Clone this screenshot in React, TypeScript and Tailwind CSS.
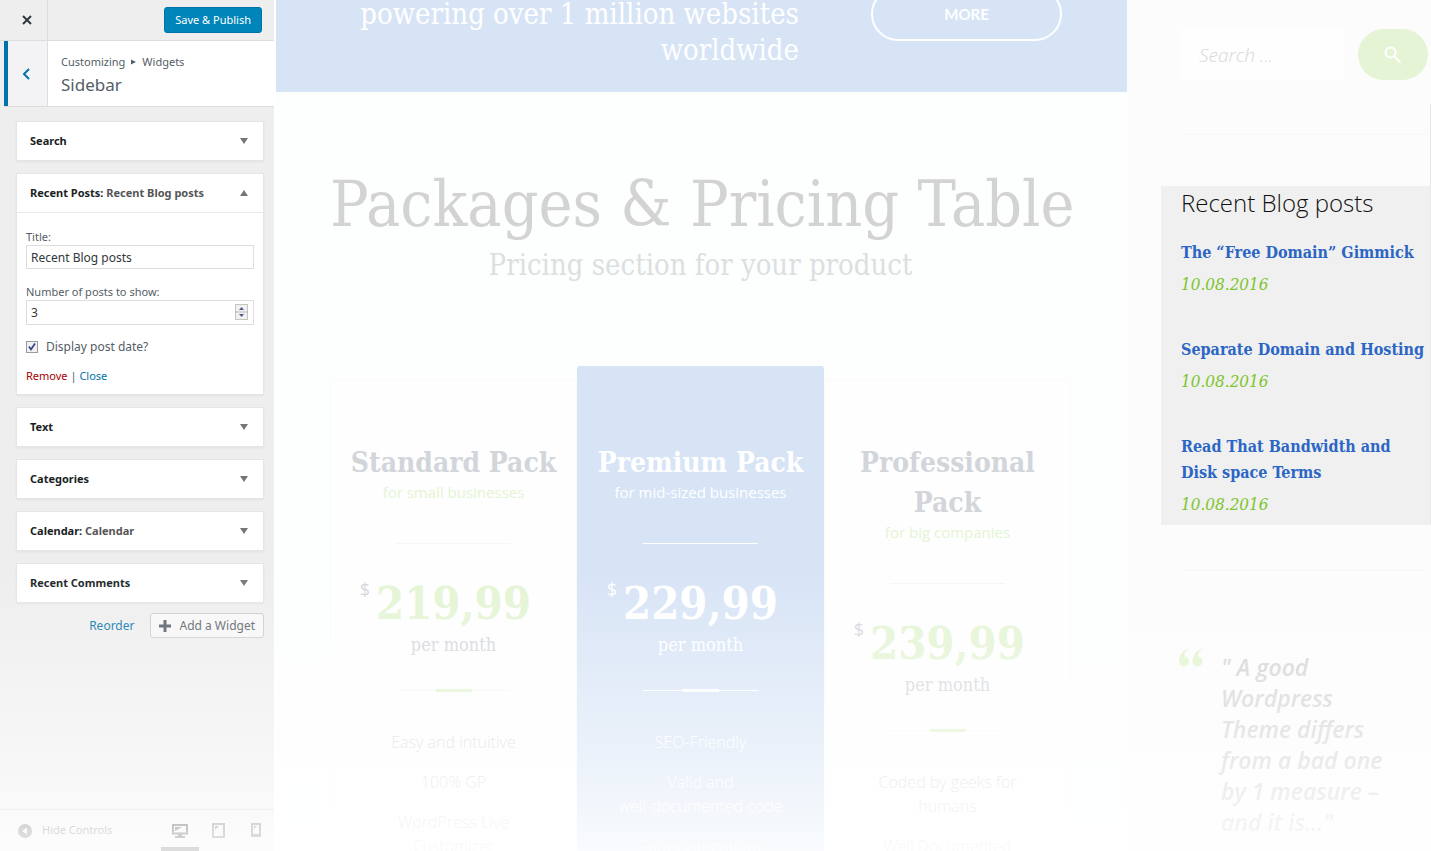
import type { ReactNode } from "react";

const serif = "font-['DejaVu_Serif_Condensed','DejaVu_Serif',serif]";
const sans = "font-['Open_Sans','Noto_Sans',sans-serif]";

function Caret({ up = false }: { up?: boolean }) {
  return (
    <svg width="8" height="6" viewBox="0 0 8 6" fill="#72777c" aria-hidden="true">
      <path d={up ? "M0 6 4 0 8 6Z" : "M0 0H8L4 6Z"} />
    </svg>
  );
}

function Widget({ name, title, children }: { name: string; title?: string; children?: ReactNode }) {
  return (
    <section className="border border-[#e5e5e5] bg-white shadow-xs">
      <button
        type="button"
        className={`flex w-full items-center justify-between pr-[15px] pl-[13px] text-left text-[11px] font-bold text-[#191e23] ${children ? "h-[39px] border-b border-[#eaeaea]" : "h-[38px]"}`}
      >
        <span>
          {name}
          {title && (
            <>
              : <span className="text-[#555]">{title}</span>
            </>
          )}
        </span>
        <Caret up={Boolean(children)} />
      </button>
      {children}
    </section>
  );
}

function RecentPostsForm() {
  return (
    <form className="px-[9px] pt-4 pb-[10px] text-[11px] leading-4 text-[#555d66]">
      <label htmlFor="title" className="block">
        Title:
      </label>
      <input
        id="title"
        type="text"
        defaultValue="Recent Blog posts"
        className="block h-6 w-full border border-[#ddd] bg-white px-1 text-xs text-[#32373c] outline-none"
      />
      <label htmlFor="count" className="mt-[15px] block">
        Number of posts to show:
      </label>
      <div className="relative">
        <input
          id="count"
          type="text"
          inputMode="numeric"
          defaultValue="3"
          className="block h-[25px] w-full border border-[#ddd] bg-white px-1 text-xs text-[#32373c] outline-none"
        />
        <svg className="absolute top-1 right-1.5" width="13" height="16" viewBox="0 0 13 16" aria-hidden="true">
          <rect x=".5" y=".5" width="12" height="15" fill="#f1f1f1" stroke="#c4c4c4" />
          <path d="M0 8H13" stroke="#b5b5b5" />
          <path d="M4 6 6.500 3 9 6ZM4 10H9L6.500 13Z" fill="#4b5a86" />
        </svg>
      </div>
      <label className="mt-[14px] flex items-center gap-2 text-xs leading-4">
        <span className="relative block size-3">
          <input
            type="checkbox"
            defaultChecked
            className="block size-3 appearance-none border border-[#9a9a9a] bg-[#f0f0f3]"
          />
          <svg className="absolute top-0 left-0" width="12" height="12" viewBox="0 0 12 12" aria-hidden="true">
            <path d="M3 5.500 5 8.500 9 2.500" fill="none" stroke="#3b4a82" strokeWidth="1.800" />
          </svg>
        </span>
        Display post date?
      </label>
      <div className="mt-[13px]">
        <a href="#remove" className="text-[#a00]">
          Remove
        </a>{" "}
        |{" "}
        <a href="#close" className="text-[#0073aa]">
          Close
        </a>
      </div>
    </form>
  );
}

function Customizer() {
  return (
    <aside className="flex w-[276px] shrink-0 flex-col border-r-2 border-white bg-[#eee] font-['Noto_Sans','Open_Sans',sans-serif]">
      <div className="flex h-[41px] shrink-0 items-center border-b border-[#ddd]">
        <button
          type="button"
          aria-label="Close customizer"
          className="flex h-full w-12 items-center justify-center border-r border-[#ddd] pl-1.5"
        >
          <svg width="10" height="10" viewBox="0 0 10 10" stroke="#32373c" strokeWidth="2" aria-hidden="true">
            <path d="M1 1 9 9M9 1 1 9" />
          </svg>
        </button>
        <button
          type="button"
          className="mr-3 ml-auto h-[26px] rounded-[3px] border border-[#0073aa] bg-[#0085ba] px-2.5 text-[11px] text-white"
        >
          Save &amp; Publish
        </button>
      </div>
      <div className="ml-1 flex h-[66px] shrink-0 border-b border-[#ddd] bg-white">
        <button
          type="button"
          aria-label="Back"
          className="flex w-11 items-center justify-center border-r border-l-4 border-r-[#ddd] border-l-[#0073aa] bg-[#f3f3f5] pr-1"
        >
          <svg width="8" height="12" viewBox="0 0 8 12" fill="none" stroke="#0073aa" strokeWidth="2" aria-hidden="true">
            <path d="M7 1 2 6 7 11" />
          </svg>
        </button>
        <div className="pt-3 pl-[13px] text-[#555d66]">
          <p className="flex items-center gap-1.5 text-[11px] leading-[18px]">
            Customizing
            <svg width="5" height="6" viewBox="0 0 5 6" fill="#555d66" aria-hidden="true">
              <path d="M0 .5 5 3 0 5.500Z" />
            </svg>
            Widgets
          </p>
          <h1 className="text-[17px] leading-7">Sidebar</h1>
        </div>
      </div>
      <div className="flex flex-1 flex-col gap-3 pt-[14px] pr-2.5 pl-4">
        <Widget name="Search" />
        <Widget name="Recent Posts" title="Recent Blog posts">
          <RecentPostsForm />
        </Widget>
        <Widget name="Text" />
        <Widget name="Categories" />
        <Widget name="Calendar" title="Calendar" />
        <Widget name="Recent Comments" />
        <div className="-mt-0.5 flex items-center justify-end gap-4 text-xs">
          <button type="button" className="text-[#0073aa]">
            Reorder
          </button>
          <button
            type="button"
            className="flex h-[25px] items-center gap-2 rounded-[3px] border border-[#ccc] bg-[#f7f7f7] px-2 text-[#555d66]"
          >
            <svg width="12" height="12" viewBox="0 0 12 12" stroke="#555d66" strokeWidth="3" aria-hidden="true">
              <path d="M6 0V12M0 6H12" />
            </svg>
            Add a Widget
          </button>
        </div>
      </div>
      <footer className="flex h-[42px] shrink-0 items-stretch border-t border-[#ccc] text-[11px] text-[#555]">
        <button type="button" className="flex items-center gap-2.5 pl-[18px]">
          <svg width="14" height="14" viewBox="0 0 14 14" aria-hidden="true">
            <circle cx="7" cy="7" r="7" fill="#555" />
            <path d="M9 3.500V10.500L4 7Z" fill="#eee" />
          </svg>
          Hide Controls
        </button>
        <div className="ml-auto flex">
          <button
            type="button"
            aria-label="Desktop preview"
            className="flex w-[38px] items-center justify-center border-b-4 border-[#222] pt-1"
          >
            <svg width="16" height="14" viewBox="0 0 16 14" aria-hidden="true">
              <path d="M1 1H15V9.500H1Z" fill="none" stroke="#111" strokeWidth="2" />
              <path d="M3 3H10L3 7ZM6 10H10V12H13V14H3V12H6Z" fill="#111" />
            </svg>
          </button>
          <button type="button" aria-label="Tablet preview" className="flex w-[38px] items-center justify-center">
            <svg width="13" height="15" viewBox="0 0 13 15" aria-hidden="true">
              <path d="M1 1H12V14H1Z" fill="none" stroke="#555" strokeWidth="2" />
              <path d="M3 3H7L3 7Z" fill="#555" />
            </svg>
          </button>
          <button type="button" aria-label="Mobile preview" className="flex w-[37px] items-center justify-center">
            <svg width="10" height="15" viewBox="0 0 10 15" aria-hidden="true">
              <path d="M1 1H9V13H1Z" fill="none" stroke="#555" strokeWidth="2" />
              <path d="M3 3H6L3 6ZM1 11H9V14H1Z" fill="#555" />
            </svg>
          </button>
        </div>
      </footer>
    </aside>
  );
}

type Pack = {
  name: string;
  tagline: string;
  price: string;
  features: string[];
  premium?: boolean;
};

const packs: Pack[] = [
  {
    name: "Standard Pack",
    tagline: "for small businesses",
    price: "219,99",
    features: ["Easy and intuitive", "100% GP", "WordPress Live\nCustomizer"],
  },
  {
    name: "Premium Pack",
    tagline: "for mid-sized businesses",
    price: "229,99",
    features: ["SEO-Friendly", "Valid and\nwell-documented code", "Fonts integration"],
    premium: true,
  },
  {
    name: "Professional Pack",
    tagline: "for big companies",
    price: "239,99",
    features: ["Coded by geeks for\nhumans", "Well Documented"],
  },
];

function PackCard({ pack }: { pack: Pack }) {
  const p = pack.premium;
  return (
    <article
      className={`flex flex-col items-center text-center ${
        p ? "rounded-t-[3px] bg-[#d7e4f6] pt-[77px] text-white" : "mt-[14px] border border-[#fafafb] bg-[#fefefe] pt-[62px] text-[#d2d5da]"
      }`}
    >
      <h3 className={`px-3 text-[28px] leading-10 font-bold ${serif}`}>{pack.name}</h3>
      <p className={`text-[15px] leading-[18px] ${sans} ${p ? "" : "text-[#e3f4d3]"}`}>{pack.tagline}</p>
      <hr className={`mt-[42px] w-[115px] ${p ? "border-white" : "border-[#f6f6f7]"}`} />
      <div className={`relative mt-[33px] ${serif}`}>
        <span className={`absolute top-0 right-full mr-1.5 text-lg leading-6 ${sans}`}>$</span>
        <span className={`block text-[45px] leading-[54px] font-bold ${p ? "" : "text-[#e3f4d3]"}`}>{pack.price}</span>
      </div>
      <p className={`mt-0.5 text-lg leading-6 ${serif}`}>per month</p>
      <div className="mt-8 flex w-[115px] items-center">
        <span className={`h-px flex-1 ${p ? "bg-white" : "bg-[#f6f6f7]"}`} />
        <span className={`h-[3px] w-9 ${p ? "bg-white" : "bg-[#e0f3cd]"}`} />
        <span className={`h-px flex-1 ${p ? "bg-white" : "bg-[#f6f6f7]"}`} />
      </div>
      <ul className={`mt-[38px] flex flex-col gap-4 text-base leading-6 font-light whitespace-pre-line ${sans}`}>
        {pack.features.map((feature) => (
          <li key={feature}>{feature}</li>
        ))}
      </ul>
    </article>
  );
}

function Preview() {
  return (
    <main className="flex min-w-0 flex-1 flex-col bg-[#fdfefe]">
      <section className={`flex h-[92px] shrink-0 items-end justify-end gap-[72px] bg-[#d7e4f6] pr-[65px] text-white ${serif}`}>
        <p className="w-[470px] pb-6 text-right text-[29px] leading-9">powering over 1 million websites worldwide</p>
        <button
          type="button"
          className="mb-[51px] h-[54px] w-[191px] shrink-0 rounded-full border-2 border-white font-['Lato',sans-serif] text-[15px] font-bold"
        >
          MORE
        </button>
      </section>
      <section className="shrink-0 pt-[74px] pr-14 pl-[54px]">
        <h2 className={`text-center text-[64px] leading-[76px] whitespace-nowrap text-[#d3d3d3] ${serif}`}>
          Packages &amp; Pricing Table
        </h2>
        <p className={`text-center text-[29px] leading-[46px] text-[#dcdee1] ${serif}`}>
          Pricing section for your product
        </p>
        <div className="mt-[78px] grid grid-cols-3">
          {packs.map((pack) => (
            <PackCard key={pack.name} pack={pack} />
          ))}
        </div>
      </section>
    </main>
  );
}

const posts = ["The “Free Domain” Gimmick", "Separate Domain and Hosting", "Read That Bandwidth and Disk space Terms"];

function BlogSidebar() {
  return (
    <aside className="relative w-[304px] shrink-0 bg-[#fcfcfd]">
      <form className="flex items-center gap-[13px] pt-[29px] pr-[3px] pl-[53px]">
        <input
          type="search"
          aria-label="Search"
          placeholder="Search ..."
          className={`h-[51px] min-w-0 flex-1 bg-[#fefefe] px-[19px] text-[19px] font-light italic outline-none placeholder:text-[#d5d8dc] ${sans}`}
        />
        <button
          type="submit"
          aria-label="Submit search"
          className="flex h-[51px] w-[70px] items-center justify-center rounded-full bg-[#e4f4d5]"
        >
          <svg width="18" height="18" viewBox="0 0 18 18" fill="none" stroke="#fff" strokeWidth="2.200" aria-hidden="true">
            <circle cx="6.500" cy="6.500" r="5" />
            <path d="M10.500 10.500 16.500 16.500" />
          </svg>
        </button>
      </form>
      <hr className="mt-[54px] mr-[3px] ml-[55px] border-[#f7f7f8]" />
      <section className="mt-[51px] ml-[34px] bg-[#f0f0f0] pb-2 pl-5">
        <h2 className={`text-2xl leading-[34px] font-light text-[#111] ${sans}`}>Recent Blog posts</h2>
        <ul className={`mt-5 flex flex-col gap-10 ${serif}`}>
          {posts.map((post) => (
            <li key={post}>
              <a href="#post" className="block pr-1 text-base leading-[26px] font-bold text-[#2c66c4]">
                {post}
              </a>
              <time className="mt-[5px] block text-[17px] leading-[26px] text-[#7cc52b] italic">10.08.2016</time>
            </li>
          ))}
        </ul>
      </section>
      <hr className="mt-[45px] mr-[3px] ml-[55px] border-[#f7f7f8]" />
      <blockquote className="mt-[81px] flex gap-4 pr-9 pl-[52px]">
        <svg className="-mt-1 shrink-0" width="26" height="19" viewBox="0 0 26 19" fill="#e0f3cd" aria-hidden="true">
          <path d="M12 0C7 2 5.500 5 5.500 8.500A5 5 0 1 1 0 13C0 7 4 1.500 12 0Z" />
          <path d="M25.500 0C20.500 2 19 5 19 8.500A5 5 0 1 1 13.500 13C13.500 7 17.500 1.500 25.500 0Z" />
        </svg>
        <p className={`text-[23px] leading-[31px] font-semibold text-[#d3d3d3] italic ${sans}`}>
          " A good Wordpress Theme differs from a bad one by 1 measure – and it is..."
        </p>
      </blockquote>
      <div className="absolute top-[104px] right-0 h-[421px] w-px bg-[#e8e8e8]" />
    </aside>
  );
}

export default function App() {
  return (
    <div className="relative flex h-screen overflow-hidden bg-white">
      <Customizer />
      <Preview />
      <BlogSidebar />
      <div className="pointer-events-none absolute inset-x-0 bottom-0 h-1/3 bg-linear-to-b from-white/0 via-white/50 via-65% to-white/85" />
    </div>
  );
}
